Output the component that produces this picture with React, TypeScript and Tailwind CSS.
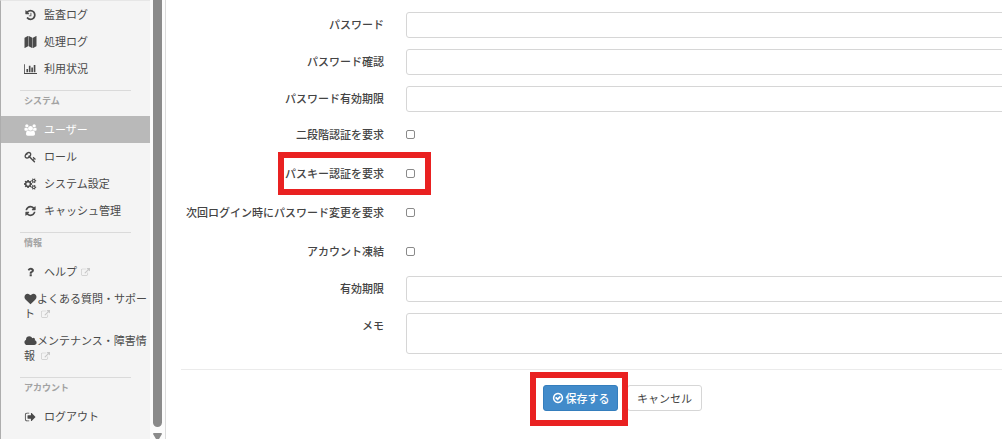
import type { ReactNode } from "react";

type Glyph = { w: number; d: string };

const glyphs: Record<string, Glyph> = {
  history: {
    w: 1792,
    d: "M1664 896q0 156-61 298t-164 245-245 164-298 61q-172 0-327-72.5t-264-204.5q-7-10-6.5-22.5t8.5-20.5l137-138q10-9 25-9 16 2 23 12 73 95 179 147t225 52q104 0 198.5-40.5t163.5-109.5 109.5-163.5 40.5-198.5-40.5-198.5-109.5-163.5-163.5-109.5-198.5-40.5q-98 0-188 35.5t-160 101.5l137 138q31 30 14 69-17 40-59 40h-448q-26 0-45-19t-19-45v-448q0-42 40-59 39-17 69 14l130 129q107-101 244.5-156.5t284.5-55.5q156 0 298 61t245 164 164 245 61 298zm-640-288v448q0 14-9 23t-23 9h-320q-14 0-23-9t-9-23v-64q0-14 9-23t23-9h224v-352q0-14 9-23t23-9h64q14 0 23 9t9 23z",
  },
  map: {
    w: 1792,
    d: "M512 0q13 0 22.5 9.500t9.500 22.500v1472q0 20-17 28l-480 256q-7 4-15 4-13 0-22.500-9.500t-9.500-22.500v-1472q0-20 17-28l480-256q7-4 15-4zm1248 0q13 0 22.500 9.500t9.500 22.500v1472q0 20-17 28l-480 256q-7 4-15 4-13 0-22.500-9.500t-9.500-22.500v-1472q0-20 17-28l480-256q7-4 15-4zm-1120 0q8 0 14 3l512 256q18 10 18 29v1472q0 13-9.500 22.500t-22.500 9.500q-8 0-14-3l-512-256q-18-10-18-29v-1472q0-13 9.500-22.500t22.500-9.500z",
  },
  chart: {
    w: 2048,
    d: "M640 896v512h-256v-512h256zm384-512v1024h-256v-1024h256zm1024 1152v128h-2048v-1536h128v1408h1920zm-640-896v768h-256v-768h256zm384-384v1152h-256v-1152h256z",
  },
  users: {
    w: 2048,
    d: "M657 896q-162 5-265 128h-134q-82 0-138-40.5t-56-118.5q0-353 124-353 6 0 43.5 21t97.5 42.5 119 21.5q67 0 133-23-5 37-5 66 0 139 81 256zm1071 637q0 120-73 189.5t-194 69.5h-874q-121 0-194-69.5t-73-189.5q0-53 3.5-103.5t14-109 26.5-108.5 43-97.5 62-81 85.5-53.5 111.5-20q10 0 43 21.5t73 48 107 48 135 21.5 135-21.5 107-48 73-48 43-21.5q61 0 111.5 20t85.5 53.5 62 81 43 97.5 26.5 108.5 14 109 3.5 103.5zm-1024-1277q0 106-75 181t-181 75-181-75-75-181 75-181 181-75 181 75 75 181zm704 384q0 159-112.5 271.5t-271.5 112.5-271.5-112.5-112.5-271.5 112.5-271.5 271.5-112.5 271.5 112.5 112.5 271.5zm576 225q0 78-56 118.5t-138 40.5h-134q-103-123-265-128 81-117 81-256 0-29-5-66 66 23 133 23 59 0 119-21.5t97.5-42.5 43.5-21q124 0 124 353zm-128-609q0 106-75 181t-181 75-181-75-75-181 75-181 181-75 181 75 75 181z",
  },
  key: {
    w: 1792,
    d: "M832 512q0-80-56-136t-136-56-136 56-56 136q0 42 19 83-41-19-83-19-80 0-136 56t-56 136 56 136 136 56 136-56 56-136q0-42-19-83 41 19 83 19 80 0 136-56t56-136zm851 704q0 17-49 66t-66 49q-9 0-28.5-16t-36.5-33-38.5-40-24.5-26l-96 96 220 220q28 28 28 68 0 42-39 81t-81 39q-40 0-68-28l-671-671q-176 131-365 131-163 0-265.5-102.5t-102.5-265.5q0-160 95-313t248-248 313-95q163 0 265.5 102.5t102.5 265.5q0 189-131 365l355 355 96-96q-3-3-26-24.5t-40-38.5-33-36.5-16-28.5q0-17 49-66t66-49q13 0 23 10 6 6 46 44.5t82 79.5 86.5 86 73 78 28.5 41z",
  },
  cogs: {
    w: 2048,
    d: "M896 896q0-106-75-181t-181-75-181 75-75 181 75 181 181 75 181-75 75-181zm768 512q0-52-38-90t-90-38-90 38-38 90q0 53 37.5 90.5t90.5 37.5 90.5-37.5 37.5-90.5zm0-1024q0-52-38-90t-90-38-90 38-38 90q0 53 37.5 90.5t90.5 37.5 90.5-37.5 37.5-90.5zm-384 421v185q0 10-7 19.5t-16 10.5l-155 24q-11 35-32 76 34 48 90 115 7 11 7 20 0 12-7 19-23 30-82.5 89.5t-78.5 59.5q-11 0-21-7l-115-90q-37 19-77 31-11 108-23 155-7 24-30 24h-186q-11 0-20-7.5t-10-17.5l-23-153q-34-10-75-31l-118 89q-7 7-20 7-11 0-21-8-144-133-144-160 0-9 7-19 10-14 41-53t47-61q-23-44-35-82l-152-24q-10-1-17-9.5t-7-19.5v-185q0-10 7-19.5t16-10.5l155-24q11-35 32-76-34-48-90-115-7-11-7-20 0-12 7-20 22-30 82-89t79-59q11 0 21 7l115 90q34-18 77-32 11-108 23-154 7-24 30-24h186q11 0 20 7.5t10 17.5l23 153q34 10 75 31l118-89q8-7 20-7 11 0 21 8 144 133 144 160 0 8-7 19-12 16-42 54t-45 60q23 48 34 82l152 23q10 2 17 10.5t7 19.5zm640 533v140q0 16-149 31-12 27-30 52 51 113 51 138 0 4-4 7-122 71-124 71-8 0-46-47t-52-68q-20 2-30 2t-30-2q-14 21-52 68t-46 47q-2 0-124-71-4-3-4-7 0-25 51-138-18-25-30-52-149-15-149-31v-140q0-16 149-31 13-29 30-52-51-113-51-138 0-4 4-7 4-2 35-20t59-34 30-16q8 0 46 46.5t52 67.5q20-2 30-2t30 2q51-71 92-112l6-2q4 0 124 70 4 3 4 7 0 25-51 138 17 23 30 52 149 15 149 31zm0-1024v140q0 16-149 31-12 27-30 52 51 113 51 138 0 4-4 7-122 71-124 71-8 0-46-47t-52-68q-20 2-30 2t-30-2q-14 21-52 68t-46 47q-2 0-124-71-4-3-4-7 0-25 51-138-18-25-30-52-149-15-149-31v-140q0-16 149-31 13-29 30-52-51-113-51-138 0-4 4-7 4-2 35-20t59-34 30-16q8 0 46 46.5t52 67.5q20-2 30-2t30 2q51-71 92-112l6-2q4 0 124 70 4 3 4 7 0 25-51 138 17 23 30 52 149 15 149 31z",
  },
  refresh: {
    w: 1792,
    d: "M1639 1056q0 5-1 7-64 268-268 434.5t-478 166.5q-146 0-282.5-55t-243.5-157l-129 129q-19 19-45 19t-45-19-19-45v-448q0-26 19-45t45-19h448q26 0 45 19t19 45-19 45l-137 137q71 66 161 102t187 36q134 0 250-65t186-179q11-17 53-117 8-23 30-23h192q13 0 22.5 9.5t9.5 22.5zm25-800v448q0 26-19 45t-45 19h-448q-26 0-45-19t-19-45 19-45l138-138q-148-137-349-137-134 0-250 65t-186 179q-11 17-53 117-8 23-30 23h-199q-13 0-22.5-9.5t-9.5-22.5v-7q65-268 270-434.5t480-166.5q146 0 284 55.5t245 156.5l130-129q19-19 45-19t45 19 19 45z",
  },
  question: {
    w: 1792,
    d: "M1088 1256v240q0 16-12 28t-28 12h-240q-16 0-28-12t-12-28v-240q0-16 12-28t28-12h240q16 0 28 12t12 28zm316-600q0 54-15.5 101t-35 76.5-55 59.5-57.5 43.5-61 35.5q-41 23-68.5 65t-27.5 67q0 17-12 32.5t-28 15.5h-240q-15 0-25.5-18.5t-10.5-37.5v-45q0-83 65-156.5t143-108.5q59-27 84-56t25-76q0-42-46.5-74t-107.5-32q-65 0-108 29-35 25-107 115-13 16-31 16-12 0-25-8l-164-125q-13-10-15.5-25t5.5-28q160-266 464-266 80 0 161 31t146 83 106 127.5 41 158.5z",
  },
  heart: {
    w: 1792,
    d: "M896 1664q-26 0-44-18l-624-602q-10-8-27.5-26t-55.5-65.5-68-97.5-53.5-121-23.5-138q0-220 127-344t351-124q62 0 126.5 21.5t120 58 95.5 68.5 76 68q36-36 76-68t95.5-68.5 120-58 126.5-21.5q224 0 351 124t127 344q0 221-229 450l-623 600q-18 18-44 18z",
  },
  cloud: {
    w: 2048,
    d: "M1984 1152q0 159-112.5 271.5t-271.5 112.5h-1088q-185 0-316.5-131.5t-131.5-316.5q0-132 71-241.5t187-163.5q-2-28-2-43 0-212 150-362t362-150q158 0 286.5 88t187.5 230q70-62 166-62 106 0 181 75t75 181q0 75-41 138 129 30 213 134.5t84 239.5z",
  },
  signOut: {
    w: 1792,
    d: "M704 1440q0 4 1 20t.5 26.5-3 23.5-10 19.5-20.5 6.5h-320q-119 0-203.5-84.5t-84.5-203.5v-704q0-119 84.5-203.5t203.5-84.5h320q13 0 22.5 9.5t9.5 22.5q0 4 1 20t.5 26.5-3 23.5-10 19.5-20.5 6.5h-320q-66 0-113 47t-47 113v704q0 66 47 113t113 47h312l11.5 1 11.5 3 8 5.5 7 9 2 13.5zm928-544q0 26-19 45l-544 544q-19 19-45 19t-45-19-19-45v-288h-448q-26 0-45-19t-19-45v-384q0-26 19-45t45-19h448v-288q0-26 19-45t45-19 45 19l544 544q19 19 19 45z",
  },
  external: {
    w: 1792,
    d: "M1408 928v320q0 119-84.5 203.5t-203.5 84.5h-832q-119 0-203.5-84.5t-84.5-203.5v-832q0-119 84.5-203.5t203.5-84.5h704q14 0 23 9t9 23v64q0 14-9 23t-23 9h-704q-66 0-113 47t-47 113v832q0 66 47 113t113 47h832q66 0 113-47t47-113v-320q0-14 9-23t23-9h64q14 0 23 9t9 23zm384-864v512q0 26-19 45t-45 19-45-19l-176-176-652 652q-10 10-23 10t-23-10l-114-114q-10-10-10-23t10-23l652-652-176-176q-19-19-19-45t19-45 45-19h512q26 0 45 19t19 45z",
  },
  check: {
    w: 1792,
    d: "M1299 813l-422 422q-19 19-45 19t-45-19l-294-294q-19-19-19-45t19-45l102-102q19-19 45-19t45 19l147 147 275-275q19-19 45-19t45 19l102 102q19 19 19 45t-19 45zm141 83q0-148-73-273t-198-198-273-73-273 73-198 198-73 273 73 273 198 198 273 73 273-73 198-198 73-273zm224 0q0 209-103 385.5t-279.5 279.5-385.5 103-385.5-103-279.5-279.5-103-385.5 103-385.5 279.5-279.5 385.5-103 385.5 103 279.5 279.5 103 385.5z",
  },
};

function Icon({ name, className }: { name: string; className: string }) {
  const g = glyphs[name];
  return (
    <svg viewBox={`0 0 ${g.w} 1792`} fill="currentColor" aria-hidden="true" className={className}>
      <path d={g.d} />
    </svg>
  );
}

type Item = { icon: string; text: string; active?: boolean; external?: boolean; inline?: boolean };

function MenuItem({ icon, text, active, external, inline }: Item) {
  const ext = external && <Icon name="external" className="ml-1 inline h-[9px] w-[9px] align-[-1px] text-[#c8c8c8]" />;
  return (
    <li>
      <a
        href="#"
        className={
          active
            ? "block bg-[#b9b9b9] py-[6px] pl-[23px] text-white"
            : "block py-[6px] pr-[2px] pl-[23px] text-[#4a4a4a]"
        }
      >
        {inline ? (
          <span className="block">
            <Icon name={icon} className="inline h-3 w-[13px] align-[-2px]" />
            {text}
            {external && " "}
            {ext}
          </span>
        ) : (
          <span className="flex items-center">
            <Icon name={icon} className="mr-[7px] h-3 w-[13px]" />
            <span>
              {text}
              {ext}
            </span>
          </span>
        )}
      </a>
    </li>
  );
}

function MenuGroup({ title, items }: { title?: string; items: Item[] }) {
  return (
    <section>
      {title && (
        <h2 className="mt-2 mr-[19px] mb-[5px] ml-[19px] border-t border-[#dadada] pl-1 text-[9px] leading-5 font-bold text-[#a2a2a2]">
          {title}
        </h2>
      )}
      <ul>
        {items.map((item) => (
          <MenuItem key={item.text} {...item} />
        ))}
      </ul>
    </section>
  );
}

const fieldClass = "block w-full rounded-[3px] border border-[#d6d6d6] bg-white px-2 outline-none";

function Row({ id, label, children }: { id: string; label: string; children: ReactNode }) {
  return (
    <div className="flex items-start">
      <label htmlFor={id} className="mr-[22px] w-[203px] shrink-0 text-right leading-[25px] font-medium">
        {label}
      </label>
      <div className="min-w-0 flex-1">{children}</div>
    </div>
  );
}

function TextRow({ id, label, type = "text" }: { id: string; label: string; type?: string }) {
  return (
    <Row id={id} label={label}>
      <input id={id} type={type} className={`h-[26px] ${fieldClass}`} />
    </Row>
  );
}

function CheckRow({ id, label, marked }: { id: string; label: string; marked?: boolean }) {
  return (
    <div className="flex h-[39px] items-center">
      <div className="relative flex items-center">
        {marked && (
          <div className="pointer-events-none absolute -top-[9px] -right-4 -bottom-[9px] left-[97px] border-[6px] border-[#e92121]" />
        )}
        <label htmlFor={id} className="mr-[22px] w-[203px] text-right leading-[25px] font-medium">
          {label}
        </label>
        <input
          id={id}
          type="checkbox"
          className="h-[9px] w-[9px] appearance-none rounded-[2px] border border-[#8a8a8a] bg-white checked:bg-[#428bca]"
        />
      </div>
    </div>
  );
}

export default function App() {
  return (
    <div className="flex h-screen overflow-hidden bg-white font-['Noto_Sans_CJK_JP',sans-serif] text-[11px] leading-[15px] text-[#444]">
      <nav className="w-[150px] shrink-0 border-t border-l border-t-[#e6e6e6] border-l-[#adadad] bg-[#f4f4f4]">
        <MenuGroup
          items={[
            { icon: "history", text: "監査ログ" },
            { icon: "map", text: "処理ログ" },
            { icon: "chart", text: "利用状況" },
          ]}
        />
        <MenuGroup
          title="システム"
          items={[
            { icon: "users", text: "ユーザー", active: true },
            { icon: "key", text: "ロール" },
            { icon: "cogs", text: "システム設定" },
            { icon: "refresh", text: "キャッシュ管理" },
          ]}
        />
        <MenuGroup
          title="情報"
          items={[
            { icon: "question", text: "ヘルプ", external: true },
            { icon: "heart", text: "よくある質問・サポート", external: true, inline: true },
            { icon: "cloud", text: "メンテナンス・障害情報", external: true, inline: true },
          ]}
        />
        <MenuGroup title="アカウント" items={[{ icon: "signOut", text: "ログアウト" }]} />
      </nav>

      <div className="flex w-4 shrink-0 flex-col items-center border-r border-[#dcdcdc] bg-[#fcfcfc]" aria-hidden="true">
        <div className="w-[9px] flex-1 rounded-b-full bg-[#8b8b8b]" />
        <svg viewBox="0 0 9 6" className="mt-[6px] h-[6px] w-[9px]" fill="#8b8b8b">
          <path d="M1 0h7q1 0 1 1L6 6H3L0 1Q0 0 1 0z" />
        </svg>
      </div>

      <main className="min-w-0 flex-1 overflow-hidden pl-[15px]">
        <form className="-mr-2 pt-3" onSubmit={(e) => e.preventDefault()}>
          <div className="flex flex-col gap-[11px]">
            <TextRow id="password" label="パスワード" type="password" />
            <TextRow id="password-confirm" label="パスワード確認" type="password" />
            <TextRow id="password-expiry" label="パスワード有効期限" />
          </div>
          <div className="mt-[3px] mb-[5px]">
            <CheckRow id="two-step" label="二段階認証を要求" />
            <CheckRow id="passkey" label="パスキー認証を要求" marked />
            <CheckRow id="change-password" label="次回ログイン時にパスワード変更を要求" />
            <CheckRow id="frozen" label="アカウント凍結" />
          </div>
          <div className="flex flex-col gap-[11px]">
            <TextRow id="expiry" label="有効期限" />
            <Row id="memo" label="メモ">
              <textarea id="memo" className={`h-[41px] resize-none ${fieldClass}`} />
            </Row>
          </div>
          <div className="mt-[15px] flex gap-[9px] border-t border-[#ebebeb] pt-[15px] pl-[362px]">
            <div className="relative">
              <button
                type="submit"
                className="flex h-[26px] w-[75px] items-center justify-center gap-[2px] rounded-[3px] border border-[#357ebd] bg-[#428bca] font-medium whitespace-nowrap text-white"
              >
                <Icon name="check" className="h-3 w-3" />
                保存する
              </button>
              <div className="pointer-events-none absolute -top-[13px] -right-[10px] -bottom-[15px] -left-[13px] z-10 border-[6px] border-[#e92121]" />
            </div>
            <button type="button" className="h-[26px] w-[75px] rounded-[3px] border border-[#d6d6d6] bg-white">
              キャンセル
            </button>
          </div>
        </form>
      </main>
    </div>
  );
}
